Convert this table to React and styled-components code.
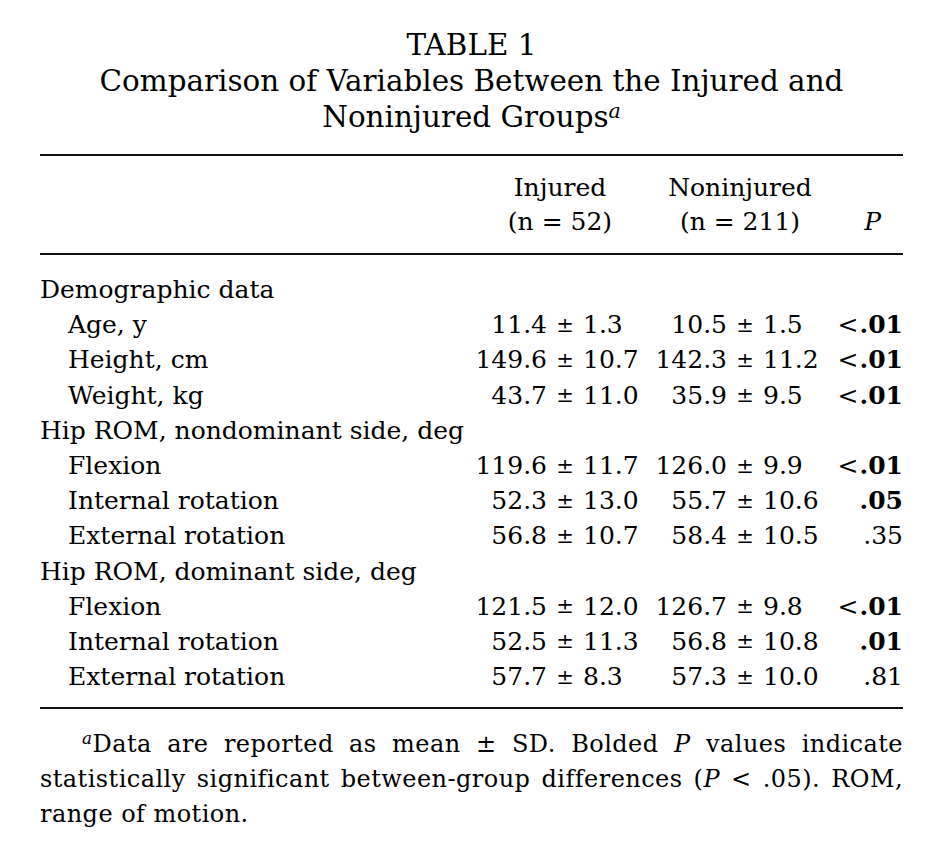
import React from "react";
import styled, { createGlobalStyle } from "styled-components";

const GlobalStyle = createGlobalStyle`
  body {
    margin: 0;
    background: #ffffff;
    color: #000000;
    font-family: "DejaVu Serif", "Liberation Serif", serif;
  }
`;

const rows = [
  { label: "Demographic data", group: true },
  { label: "Age, y", inj: ["11.4", "1.3"], non: ["10.5", "1.5"], p: ".01", lt: true, bold: true },
  { label: "Height, cm", inj: ["149.6", "10.7"], non: ["142.3", "11.2"], p: ".01", lt: true, bold: true },
  { label: "Weight, kg", inj: ["43.7", "11.0"], non: ["35.9", "9.5"], p: ".01", lt: true, bold: true },
  { label: "Hip ROM, nondominant side, deg", group: true },
  { label: "Flexion", inj: ["119.6", "11.7"], non: ["126.0", "9.9"], p: ".01", lt: true, bold: true },
  { label: "Internal rotation", inj: ["52.3", "13.0"], non: ["55.7", "10.6"], p: ".05", bold: true },
  { label: "External rotation", inj: ["56.8", "10.7"], non: ["58.4", "10.5"], p: ".35" },
  { label: "Hip ROM, dominant side, deg", group: true },
  { label: "Flexion", inj: ["121.5", "12.0"], non: ["126.7", "9.8"], p: ".01", lt: true, bold: true },
  { label: "Internal rotation", inj: ["52.5", "11.3"], non: ["56.8", "10.8"], p: ".01", bold: true },
  { label: "External rotation", inj: ["57.7", "8.3"], non: ["57.3", "10.0"], p: ".81" },
];

export default function App() {
  return (
    <Page>
      <GlobalStyle />
      <Title>
        <div>TABLE 1</div>
        <div>Comparison of Variables Between the Injured and</div>
        <div>
          Noninjured Groups<Sup>a</Sup>
        </div>
      </Title>
      <Rule />
      <HeadGrid>
        <span />
        <HeadCell>Injured<br />(n = 52)</HeadCell>
        <HeadCell>Noninjured<br />(n = 211)</HeadCell>
        <HeadP><Ital>P</Ital></HeadP>
      </HeadGrid>
      <Rule />
      <Body>
        {rows.map((r, i) =>
          r.group ? (
            <Row key={i}>
              <Label>{r.label}</Label>
            </Row>
          ) : (
            <Row key={i}>
              <Label $indent>{r.label}</Label>
              <Mean>{r.inj[0]}</Mean>
              <Pm>±</Pm>
              <Sd>{r.inj[1]}</Sd>
              <Mean>{r.non[0]}</Mean>
              <Pm>±</Pm>
              <Sd>{r.non[1]}</Sd>
              <PValue>
                {r.lt && <Lt>&lt;</Lt>}
                <PNum $bold={r.bold}>{r.p}</PNum>
              </PValue>
            </Row>
          )
        )}
      </Body>
      <Rule />
      <Footnote>
        <Sup>a</Sup>Data are reported as mean ± SD. Bolded <Ital>P</Ital> values indicate
        statistically significant between-group differences (<Ital>P</Ital> &lt; .05). ROM,
        range of motion.
      </Footnote>
    </Page>
  );
}

const Page = styled.div`
  width: 863px;
  margin-left: 40px;
  padding-top: 27px;
  font-size: 25px;
`;

const Title = styled.div`
  text-align: center;
  font-size: 29.4px;
  line-height: 36px;
  margin-bottom: 19px;
`;

const Sup = styled.sup`
  font-style: italic;
  font-size: 0.7em;
  line-height: 0;
  vertical-align: 0.45em;
`;

const Ital = styled.i`
  font-style: italic;
`;

const Rule = styled.div`
  height: 2px;
  background: #111111;
`;

const HeadGrid = styled.div`
  display: grid;
  grid-template-columns: 420px 200px 160px 83px;
  line-height: 34px;
  padding: 15px 0 14px;
`;

const HeadCell = styled.div`
  text-align: center;
`;

const HeadP = styled.div`
  align-self: end;
  text-align: right;
  padding-right: 22px;
`;

const Body = styled.div`
  padding: 17px 0 13px;
`;

const Row = styled.div`
  display: grid;
  grid-template-columns: 390px 117px 36px 72px 72px 36px 67px 73px;
  height: 35.2px;
  align-items: center;
  white-space: nowrap;
`;

const Label = styled.div`
  padding-left: ${(p) => (p.$indent ? "28px" : "0")};
`;

const Mean = styled.div`
  text-align: right;
`;

const Pm = styled.div`
  text-align: center;
  font-size: 21px;
`;

const Sd = styled.div`
  text-align: left;
`;

const PValue = styled.div`
  text-align: right;
`;

const Lt = styled.span`
  font-weight: 300;
  margin-right: 1px;
`;

const PNum = styled.span`
  font-weight: ${(p) => (p.$bold ? 700 : 400)};
`;

const Footnote = styled.p`
  margin: 0;
  padding-top: 18px;
  font-size: 24px;
  letter-spacing: 0.45px;
  line-height: 35px;
  text-align: justify;
  text-indent: 42px;
`;
